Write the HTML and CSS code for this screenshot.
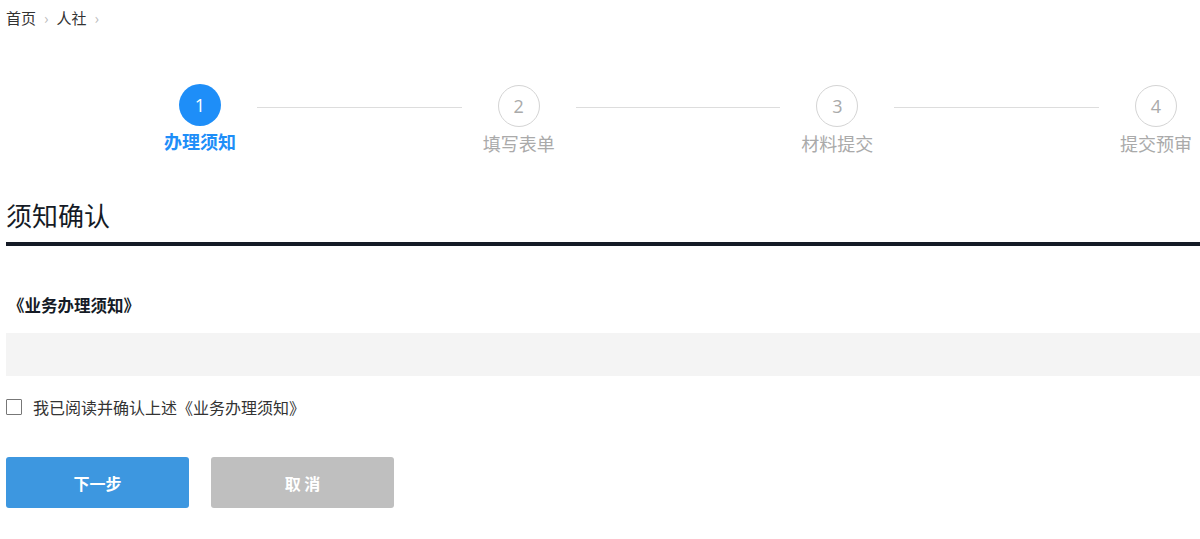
FILE: index.html
```html
<!DOCTYPE html>
<html lang="zh-CN">

<head>
	<meta charset="UTF-8" />
	<meta name="viewport" content="width=device-width, initial-scale=1.0" />
	<title>办理须知</title>
	<link rel="stylesheet" href="styles.css">
</head>

<body>
	<div class="page">
		<div class="breadcrumb">
			<a href="#">首页</a><span class="sep">›</span>
			<a href="#">人社</a><span class="sep">›</span>
		</div>

		<div class="steps">
			<div class="step active">
				<div class="step-num">1</div>
				<div class="step-title">办理须知</div>
			</div>
			<div class="step-line"></div>
			<div class="step">
				<div class="step-num">2</div>
				<div class="step-title">填写表单</div>
			</div>
			<div class="step-line"></div>
			<div class="step">
				<div class="step-num">3</div>
				<div class="step-title">材料提交</div>
			</div>
			<div class="step-line"></div>
			<div class="step">
				<div class="step-num">4</div>
				<div class="step-title">提交预审</div>
			</div>
		</div>

		<h2 class="section-title">须知确认</h2>

		<h3 class="notice-title">《业务办理须知》</h3>
		<div class="notice-box"></div>

		<label class="agree">
			<input type="checkbox" />
			<span>我已阅读并确认上述《业务办理须知》</span>
		</label>

		<div class="actions">
			<button class="btn btn-primary">下一步</button>
			<button class="btn btn-cancel">取 消</button>
		</div>
	</div>
</body>

</html>
```

FILE: styles.css
```css
body {
	margin: 0;
	font-family: "Noto Sans CJK SC", "Microsoft YaHei", sans-serif;
	color: #333;
	background: #fff;
}

.page {
	padding: 0 0 0 6px;
}

.breadcrumb {
	height: 34px;
	display: flex;
	align-items: center;
	font-size: 15px;
}

.breadcrumb a {
	color: #333;
	text-decoration: none;
}

.breadcrumb .sep {
	color: #bbb;
	margin: 0 8px;
	font-size: 15px;
}

.steps {
	display: flex;
	align-items: flex-start;
	width: 1028px;
	margin: 51px 0 0 158px;
}

.step {
	width: 72px;
	display: flex;
	flex-direction: column;
	align-items: center;
}

.step-num {
	width: 40px;
	height: 40px;
	border: 1px solid #d4d4d4;
	border-radius: 50%;
	display: flex;
	align-items: center;
	justify-content: center;
	font-size: 18px;
	color: #aaa;
	font-family: "Open Sans", sans-serif;
}

.step.active .step-num {
	width: 42px;
	height: 42px;
	margin-top: -1px;
	border: none;
	background: #1e8ef8;
	color: #fff;
}

.step-title {
	margin-top: 3px;
	font-size: 18px;
	line-height: 26px;
	color: #aaa;
	white-space: nowrap;
}

.step.active .step-title {
	margin-top: 2px;
	color: #1e8ef8;
	font-weight: bold;
}

.step-line {
	flex: 1;
	height: 1px;
	background: #ddd;
	margin: 22px 21px 0;
}

.section-title {
	margin: 41px 0 0;
	padding-bottom: 9px;
	font-size: 26px;
	font-weight: normal;
	line-height: 36px;
	color: #151b26;
	border-bottom: 4px solid #151b26;
}

.notice-title {
	margin: 45px 0 0 2px;
	font-size: 16.5px;
	line-height: 28px;
	color: #151b26;
}

.notice-box {
	height: 43px;
	margin-top: 14px;
	background: #f4f4f4;
}

.agree {
	display: flex;
	align-items: center;
	margin-top: 20px;
	font-size: 16px;
	line-height: 22px;
	color: #333;
}

.agree input {
	width: 16px;
	height: 16px;
	margin: 0 11px 0 0;
	appearance: none;
	border: 1px solid #777;
	border-radius: 1px;
	background: #fff;
}

.actions {
	display: flex;
	gap: 22px;
	margin-top: 39px;
}

.btn {
	width: 183px;
	height: 51px;
	border: none;
	border-radius: 3px;
	font-family: inherit;
	font-size: 16px;
	font-weight: bold;
	color: #fff;
	cursor: pointer;
}

.btn-primary {
	background: #3d97e0;
}

.btn-cancel {
	background: #bfbfbf;
}
```
